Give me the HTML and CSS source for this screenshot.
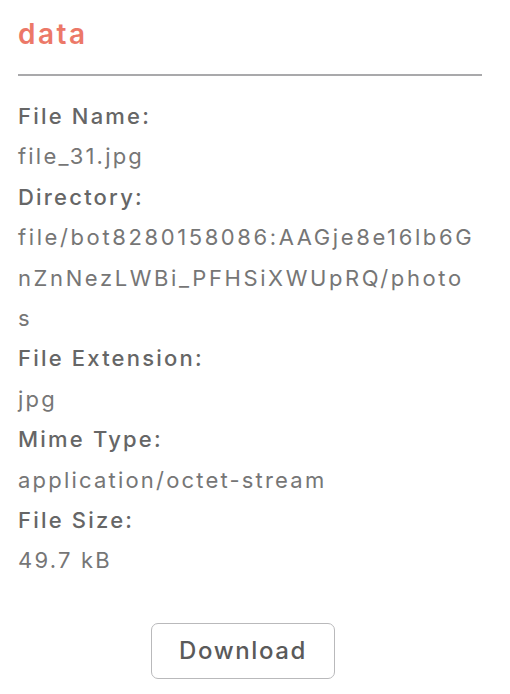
FILE: index.html
```html
<!DOCTYPE html>
<html lang="en">
<head>
<meta charset="utf-8">
<title>data</title>
<link rel="stylesheet" href="styles.css">
</head>
<body>
<div class="panel">
  <h2 class="title">data</h2>
  <hr class="rule">
  <dl class="info">
    <dt>File Name:</dt>
    <dd>file_31.jpg</dd>
    <dt>Directory:</dt>
    <dd class="path">file/bot8280158086:AAGje8e16lb6G<wbr>nZnNezLWBi_PFHSiXWUpRQ/photo<br>s</dd>
    <dt>File Extension:</dt>
    <dd>jpg</dd>
    <dt>Mime Type:</dt>
    <dd>application/octet-stream</dd>
    <dt>File Size:</dt>
    <dd>49.7 kB</dd>
  </dl>
  <div class="actions">
    <button class="btn" type="button">Download</button>
  </div>
</div>
</body>
</html>
```

FILE: styles.css
```css
html, body {
  margin: 0;
  padding: 0;
  background: #ffffff;
}

.panel {
  width: 464px;
  padding: 14px 0 0 18px;
  font-family: Inter, "Noto Sans", "Liberation Sans", sans-serif;
}

.title {
  margin: 0;
  font-size: 28px;
  line-height: 40px;
  font-weight: 600;
  letter-spacing: 2.5px;
  color: #ec7868;
}

.rule {
  margin: 20px 0 0 0;
  border: 0;
  height: 2px;
  background: #a9a9ab;
}

.info {
  margin: 20px 0 0 0;
  font-size: 22px;
  line-height: 40.4px;
  letter-spacing: 2.2px;
}

.info dt {
  margin: 0;
  color: #666666;
  font-weight: 500;
}

.info dd {
  margin: 0;
  color: #767676;
  font-weight: 400;
}

.path {
  overflow-wrap: anywhere;
  letter-spacing: 2.6px;
}

.actions {
  display: flex;
  margin-top: 42px;
  padding-left: 133px;
}

.btn {
  width: 184px;
  height: 56px;
  border: 1.5px solid #b9b9bb;
  border-radius: 7px;
  background: #ffffff;
  font-family: Inter, "Noto Sans", "Liberation Sans", sans-serif;
  font-size: 24px;
  font-weight: 500;
  letter-spacing: 1.6px;
  color: #5a5a5a;
  padding: 0;
}
```
